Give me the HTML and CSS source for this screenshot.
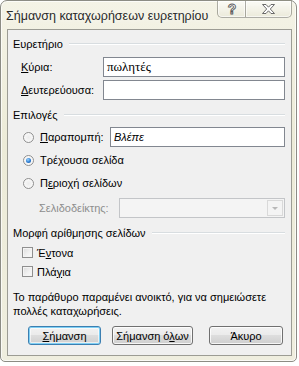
FILE: index.html
```html
<!DOCTYPE html>
<html lang="el">
<head>
    <meta charset="UTF-8">
    <title>Σήμανση καταχωρήσεων ευρετηρίου</title>
    <link rel="stylesheet" href="styles.css">
</head>
<body>
    <div class="window">
        <!-- γραμμή τίτλου -->
        <div class="titlebar">
            <span class="title">Σήμανση καταχωρήσεων ευρετηρίου</span>
            <div class="caption-buttons">
                <div class="cap help">
                    <svg width="12" height="14" viewBox="0 0 12 14">
                        <text x="6" y="12" text-anchor="middle" font-family="Liberation Sans, sans-serif" font-size="14" font-weight="bold" fill="#fff" stroke="#5a5a5a" stroke-width="0.9">?</text>
                    </svg>
                </div>
                <div class="cap close">
                    <svg width="15" height="12" viewBox="0 0 15 12">
                        <path d="M1.5 1.5 H5 L7.5 4.2 L10 1.5 H13.5 L9.3 6 L13.5 10.5 H10 L7.5 7.8 L5 10.5 H1.5 L5.7 6 Z" fill="#fff" stroke="#5b5b5b" stroke-width="0.9" stroke-linejoin="round"/>
                    </svg>
                </div>
            </div>
        </div>

        <div class="client">
            <div class="group-title"><span>Ευρετήριο</span></div>
            <div class="row field first">
                <label class="label"><u>Κ</u>ύρια:</label>
                <div class="input serif">πωλητές</div>
            </div>
            <div class="row field second">
                <label class="label"><u>Δ</u>ευτερεύουσα:</label>
                <div class="input"></div>
            </div>

            <div class="group-title options"><span>Επιλογές</span></div>
            <div class="row choice ref">
                <span class="radio"></span>
                <label class="label"><u>Π</u>αραπομπή:</label>
                <div class="input italic">Βλέπε</div>
            </div>
            <div class="row choice">
                <span class="radio checked"></span>
                <label>Τρέ<u>χ</u>ουσα σελίδα</label>
            </div>
            <div class="row choice">
                <span class="radio"></span>
                <label>Π<u>ε</u>ριοχή σελίδων</label>
            </div>
            <div class="row choice bookmark">
                <label class="label disabled">Σελιδοδείκτης:</label>
                <div class="combo">
                    <span class="combo-arrow"></span>
                </div>
            </div>

            <div class="group-title format"><span>Μορφή αρίθμησης σελίδων</span></div>
            <div class="row check">
                <span class="checkbox"></span>
                <label>Έ<u>ν</u>τονα</label>
            </div>
            <div class="row check">
                <span class="checkbox"></span>
                <label>Πλά<u>γ</u>ια</label>
            </div>

            <p class="note">Το παράθυρο παραμένει ανοικτό, για να σημειώσετε πολλές καταχωρήσεις.</p>

            <div class="buttons">
                <button class="btn default"><u>Σ</u>ήμανση</button>
                <button class="btn all">Σήμανση ό<u>λ</u>ων</button>
                <button class="btn cancel">Άκυρο</button>
            </div>
        </div>
    </div>
</body>
</html>
```

FILE: styles.css
```css
/* γενικά */
html, body {
    margin: 0;
    padding: 0;
    background: #ffffff;
}

body {
    font-family: "Liberation Sans", Arial, sans-serif;
    font-size: 11px;
    color: #000;
}

u {
    text-decoration: underline;
    text-underline-offset: 1px;
}

/* παράθυρο */
.window {
    width: 297px;
    height: 362px;
    box-sizing: border-box;
    border: 1px solid #8c8c84;
    border-radius: 7px 7px 5px 5px;
    background: linear-gradient(to bottom, #f4f3e6 0%, #ecebd8 40%, #efeedf 100%);
    padding: 0 4px 5px 6px;
    box-shadow: inset 0 0 0 1px rgba(255, 255, 255, 0.7);
}

.titlebar {
    height: 28px;
    display: flex;
    align-items: flex-start;
    justify-content: space-between;
}

.title {
    font-size: 12.5px;
    color: #2a2a2a;
    margin-top: 8px;
    margin-left: -1px;
    text-shadow: 0 0 6px rgba(255, 255, 255, 0.9);
}

.caption-buttons {
    display: flex;
    margin-top: -1px;
    margin-right: 0;
}

.cap {
    height: 18px;
    box-sizing: border-box;
    border: 1px solid rgba(80, 80, 70, 0.45);
    background: linear-gradient(to bottom, rgba(255, 255, 255, 0.65), rgba(230, 229, 212, 0.6));
    display: flex;
    align-items: center;
    justify-content: center;
    box-shadow: inset 0 0 0 1px rgba(255, 255, 255, 0.6);
}

.cap.help {
    width: 28px;
    border-radius: 0 0 0 5px;
    border-right: none;
}

.cap.close {
    width: 47px;
    border-radius: 0 0 5px 0;
}

/* περιοχή περιεχομένου */
.client {
    height: 327px;
    box-sizing: border-box;
    border: 1px solid #9c9c94;
    background: #f0f0f0;
    padding: 6px 6px 0 5px;
}

.group-title {
    height: 16px;
    display: flex;
    align-items: center;
    gap: 6px;
}

.group-title::after {
    content: "";
    flex: 1;
    height: 1px;
    background: #d8dde0;
    border-bottom: 1px solid #ffffff;
}

.group-title.options { margin-top: 7px; }
.group-title.format { margin-top: 7px; }

.row {
    display: flex;
    align-items: center;
}

.field {
    height: 20px;
    padding-left: 8px;
}

.field.first { margin-top: 5px; }
.field.second { margin-top: 3px; }

.label {
    flex: none;
}

.field .label {
    width: 82px;
}

.input {
    flex: 1;
    height: 20px;
    box-sizing: border-box;
    border: 1px solid #828790;
    background: #fff;
    padding: 0 3px;
    line-height: 18px;
}

.input.serif {
    font-family: "Liberation Serif", "Times New Roman", serif;
    font-size: 13px;
}

.input.italic {
    font-style: italic;
}

.choice {
    height: 20px;
    padding-left: 10px;
}

.choice.ref {
    margin-top: 4px;
}

.choice.ref .label {
    width: 70px;
}

.choice + .choice { margin-top: 3px; }

.radio {
    width: 11px;
    height: 11px;
    box-sizing: border-box;
    border-radius: 50%;
    border: 1px solid #8f8f8f;
    background: radial-gradient(circle at 50% 50%, #ececec 0%, #f6f6f6 55%, #ffffff 100%);
    margin-right: 6px;
    position: relative;
    flex: none;
}

.radio.checked::after {
    content: "";
    position: absolute;
    left: 2px;
    top: 2px;
    width: 5px;
    height: 5px;
    border-radius: 50%;
    background: radial-gradient(circle at 40% 35%, #9cd6ff 0%, #2b7cd3 55%, #1a4f9a 100%);
}

.choice.bookmark {
    margin-top: 5px;
    padding-left: 26px;
}

.choice.bookmark .label {
    width: 80px;
}

.disabled {
    color: #8d8d8d;
}

.combo {
    flex: 1;
    height: 20px;
    box-sizing: border-box;
    border: 1px solid #c3c5c8;
    background: #f4f4f4;
    display: flex;
    justify-content: flex-end;
}

.combo-arrow {
    width: 16px;
    height: 16px;
    margin: 1px;
    box-sizing: border-box;
    border: 1px solid #d9d9d9;
    background: #f4f4f4;
    position: relative;
}

.combo-arrow::after {
    content: "";
    position: absolute;
    left: 4px;
    top: 6px;
    border-left: 3px solid transparent;
    border-right: 3px solid transparent;
    border-top: 3px solid #b8b8b8;
}

.check {
    height: 19px;
    padding-left: 9px;
}

.group-title.format + .check {
    margin-top: 2px;
}

.checkbox {
    width: 11px;
    height: 11px;
    box-sizing: border-box;
    border: 1px solid #8f8f8f;
    background: linear-gradient(135deg, #dcdcdc 0%, #f2f2f2 60%, #fafafa 100%);
    box-shadow: inset 0 0 0 1px #f4f4f4;
    margin-right: 4px;
    flex: none;
}

.note {
    margin: 9px 0 0 0;
    line-height: 14px;
    padding-right: 4px;
}

/* κουμπιά */
.buttons {
    display: flex;
    margin-top: 8px;
    padding-left: 15px;
}

.btn {
    height: 19px;
    font-family: inherit;
    font-size: 11px;
    color: #000;
    border: 1px solid #707070;
    border-radius: 3px;
    background: linear-gradient(to bottom, #f2f2f2 0%, #ebebeb 45%, #dddddd 50%, #cfcfcf 100%);
    box-shadow: inset 0 0 0 1px rgba(255, 255, 255, 0.8);
    padding: 0;
    cursor: pointer;
}

.btn.default {
    width: 73px;
    border-color: #3c7fb1;
    box-shadow: inset 0 0 0 1px #7fd0f5, inset 0 0 0 2px rgba(255, 255, 255, 0.6);
}

.btn.all {
    width: 81px;
    margin-left: 11px;
}

.btn.cancel {
    width: 74px;
    margin-left: 16px;
}
```
